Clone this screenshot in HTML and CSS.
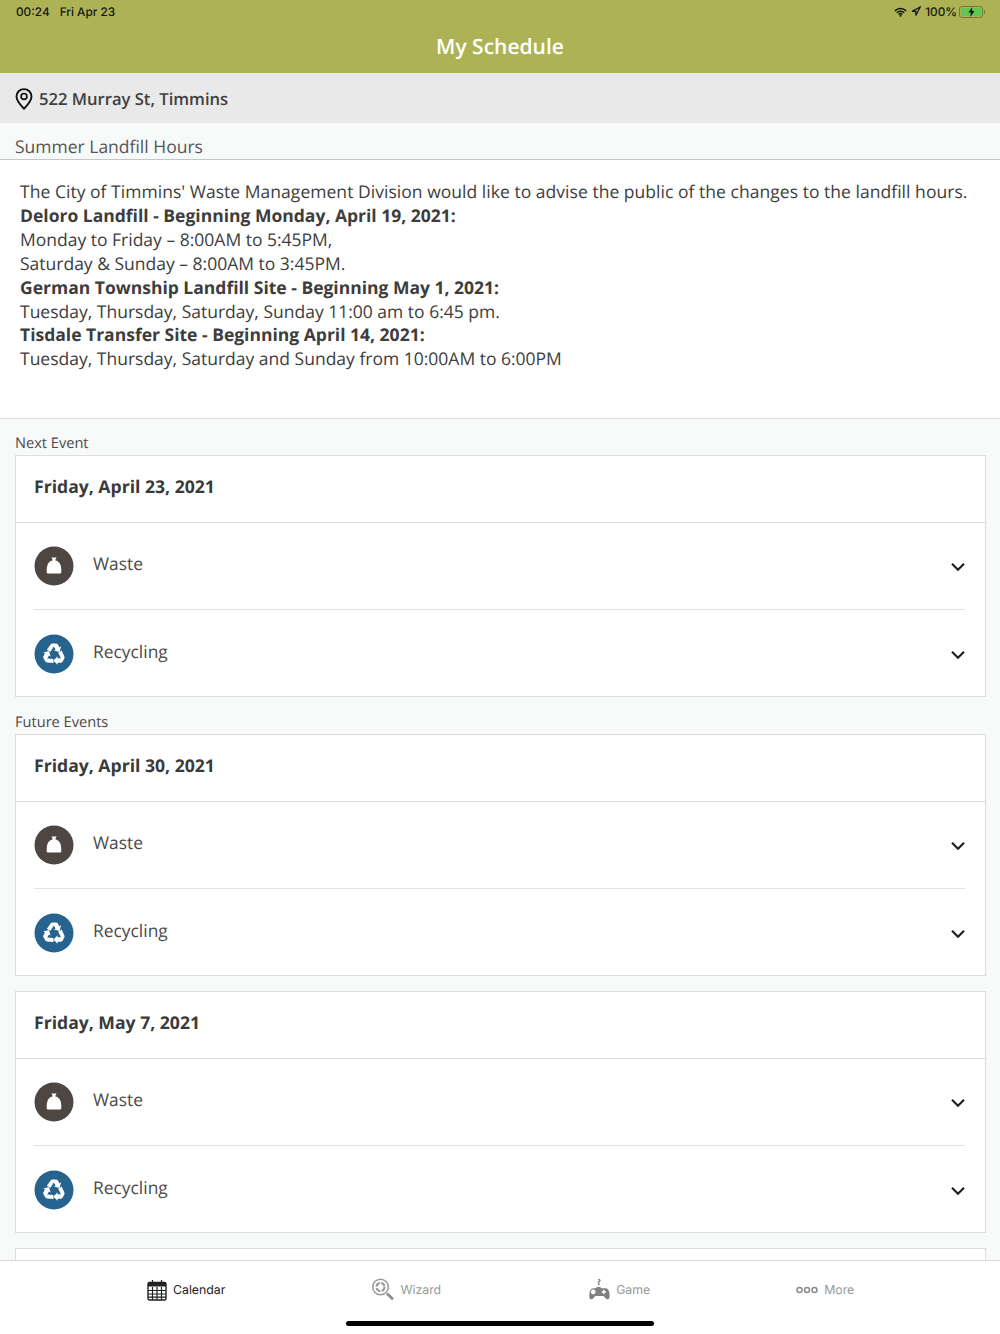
FILE: index.html
```html
<!DOCTYPE html>
<html lang="en">
<head>
  <meta charset="UTF-8">
  <meta name="viewport" content="width=device-width, initial-scale=1.0">
  <title>My Schedule</title>
  <link rel="stylesheet" href="styles.css">
</head>
<body>
  <svg class="defs" width="0" height="0">
    <symbol id="bag" viewBox="0 0 40 40">
      <circle cx="20" cy="20" r="19.5" fill="#4d4643"/>
      <path d="M17.500 11.500h5l-1.300 2.800c2.900.8 5 2.800 5.700 6 .4 1.900.5 3.900.4 5.700-.1 1-.6 1.500-1.500 1.500H14.200c-.9 0-1.400-.5-1.500-1.500-.1-1.800 0-3.800.4-5.700.7-3.200 2.800-5.200 5.700-6z" fill="#fff"/>
    </symbol>
    <symbol id="recycle" viewBox="0 0 40 40">
      <circle cx="20" cy="20" r="19.5" fill="#26638f"/>
      <g id="recycle-arm" fill="#fff">
        <path d="M12.800 15.800l3.800-5.300c.5-.7 1.200-1 2-1h3.400c.8 0 1.400.3 1.800 1l1.600 2.700 1.700-1-1.500 5.700-5.700-1.300 1.700-1-1.800-3-3.300 5.100z"/>
      </g>
      <use href="#recycle-arm" transform="rotate(120 20 20.500)"/>
      <use href="#recycle-arm" transform="rotate(240 20 20.500)"/>
    </symbol>
    <symbol id="chev" viewBox="0 0 14 10">
      <path d="M1 1.800L7 7.800l6-6" fill="none" stroke="#1d1d1d" stroke-width="2.100"/>
    </symbol>
  </svg>

  <header class="top">
    <div class="status">
      <div class="status-left"><span>00:24</span><span>Fri Apr 23</span></div>
      <div class="status-right">
        <svg class="status-wifi" width="13" height="10" viewBox="0 0 15 11"><path d="M1 4.200a9.200 9.200 0 0 1 13 0M3.200 6.400a6 6 0 0 1 8.600 0M5.400 8.300a3 3 0 0 1 4.200 0" fill="none" stroke="#111" stroke-width="1.700"/><circle cx="7.500" cy="9.800" r="1.200" fill="#111"/></svg>
        <svg class="status-arrow" width="10" height="11" viewBox="0 0 10 11"><path d="M9.200 1L1 5.400h3.800v4.200z" fill="none" stroke="#111" stroke-width="1.200"/></svg>
        <span>100%</span>
        <div class="battery"><div class="battery-fill"><svg width="7" height="10" viewBox="0 0 7 10"><path d="M4.300 0L.4 5.600h2.500L2.300 10l4.200-5.900H3.900z" fill="#111"/></svg></div></div>
        <div class="battery-tip"></div>
      </div>
    </div>
    <h1 class="title">My Schedule</h1>
  </header>

  <div class="address">
    <svg class="address-pin" width="18" height="22" viewBox="0 0 18 22"><path d="M9 1.100c-4.200 0-7.500 3.200-7.500 7.300 0 4.700 4.800 9.300 7.500 12.300 2.700-3 7.500-7.600 7.500-12.300 0-4.100-3.300-7.300-7.500-7.300z" fill="none" stroke="#111" stroke-width="1.900"/><circle cx="9" cy="8.400" r="2.900" fill="none" stroke="#111" stroke-width="1.700"/></svg>
    <span>522 Murray St, Timmins</span>
  </div>

  <main class="content">
    <h2 class="notice-title">Summer Landfill Hours</h2>
    <div class="notice">
      <span class="notice-lead">The City of Timmins' Waste Management Division would like to advise the public of the changes to the landfill hours.</span><br>
      <b>Deloro Landfill - Beginning Monday, April 19, 2021:</b><br>
      Monday to Friday – 8:00AM to 5:45PM,<br>
      Saturday &amp; Sunday – 8:00AM to 3:45PM.<br>
      <b>German Township Landfill Site - Beginning May 1, 2021:</b><br>
      Tuesday, Thursday, Saturday, Sunday 11:00 am to 6:45 pm.<br>
      <b>Tisdale Transfer Site - Beginning April 14, 2021:</b><br>
      Tuesday, Thursday, Saturday and Sunday from 10:00AM to 6:00PM
    </div>

    <div class="events">
      <h3 class="label label-first">Next Event</h3>
      <section class="card">
        <div class="card-date">Friday, April 23, 2021</div>
        <div class="row"><svg class="kind"><use href="#bag"/></svg><span class="row-name">Waste</span><svg class="chev"><use href="#chev"/></svg></div>
        <div class="row"><svg class="kind"><use href="#recycle"/></svg><span class="row-name">Recycling</span><svg class="chev"><use href="#chev"/></svg></div>
      </section>

      <h3 class="label">Future Events</h3>
      <section class="card">
        <div class="card-date">Friday, April 30, 2021</div>
        <div class="row"><svg class="kind"><use href="#bag"/></svg><span class="row-name">Waste</span><svg class="chev"><use href="#chev"/></svg></div>
        <div class="row"><svg class="kind"><use href="#recycle"/></svg><span class="row-name">Recycling</span><svg class="chev"><use href="#chev"/></svg></div>
      </section>
      <section class="card">
        <div class="card-date">Friday, May 7, 2021</div>
        <div class="row"><svg class="kind"><use href="#bag"/></svg><span class="row-name">Waste</span><svg class="chev"><use href="#chev"/></svg></div>
        <div class="row"><svg class="kind"><use href="#recycle"/></svg><span class="row-name">Recycling</span><svg class="chev"><use href="#chev"/></svg></div>
      </section>
      <section class="card"></section>
    </div>
  </main>

  <nav class="tabs">
    <div class="tab tab-active">
      <svg width="20" height="22" viewBox="0 0 20 22"><rect x="1" y="3.500" width="18" height="17.500" rx="1.500" fill="none" stroke="#222" stroke-width="1.400"/><rect x="1" y="3.500" width="18" height="4" fill="#222"/><path d="M5.500 1v4M14.500 1v4M1 11.500h18M1 15h18M1 18.200h18M5.500 8v13M10 8v13M14.500 8v13" stroke="#222" stroke-width="1.200"/></svg>
      <span>Calendar</span>
    </div>
    <div class="tab">
      <svg width="23" height="24" viewBox="0 0 23 24"><circle cx="9.500" cy="9" r="7.800" fill="none" stroke="#9a9a9a" stroke-width="1.500"/><circle cx="9.500" cy="9" r="4" fill="none" stroke="#9a9a9a" stroke-width="2" stroke-dasharray="5 1.300"/><path d="M16 15.500l6 5.700" stroke="#8a8a8a" stroke-width="2.600"/></svg>
      <span>Wizard</span>
    </div>
    <div class="tab">
      <svg width="23" height="24" viewBox="0 0 24 24"><path d="M11.500 1.200c1.400-.3 2.300.2 2 1.200-.3.900-1.800 1.100-1.600 2.100.1.600.6.800.6 2.500" fill="none" stroke="#808080" stroke-width="1.400"/><path d="M5 10.200h4c.6-1 1.300-1.400 3-1.400s2.400.4 3 1.400h4c2.300 0 3.800 1.600 4.300 4.400.3 2 .4 3.700.1 5.400-.3 1.800-2.700 2.200-3.800.9l-2.300-2.700H8.700l-2.300 2.700c-1.100 1.300-3.500.9-3.800-.9-.3-1.700-.2-3.400.1-5.400.5-2.800 2-4.400 4.300-4.400z" fill="#808080"/><circle cx="6.500" cy="14" r="2.400" fill="#fff"/><path d="M17.500 11.800v4.400M15.300 14h4.400" stroke="#fff" stroke-width="1.500"/></svg>
      <span>Game</span>
    </div>
    <div class="tab">
      <svg width="22" height="8" viewBox="0 0 22 8"><circle cx="3.500" cy="4" r="2.500" fill="none" stroke="#8a8a8a" stroke-width="1.500"/><circle cx="11" cy="4" r="2.500" fill="none" stroke="#8a8a8a" stroke-width="1.500"/><circle cx="18.500" cy="4" r="2.500" fill="none" stroke="#8a8a8a" stroke-width="1.500"/></svg>
      <span>More</span>
    </div>
    <div class="home-bar"></div>
  </nav>
</body>
</html>
```

FILE: styles.css
```css
* {
  box-sizing: border-box;
}

html, body {
  height: 1334px;
  margin: 0;
  overflow: hidden;
}

body {
  display: flex;
  flex-direction: column;
  font-family: "Open Sans", sans-serif;
  background-color: #f8f9f9;
  color: #3a3a3a;
  text-rendering: geometricPrecision;
}

.defs {
  position: absolute;
}

.top {
  height: 73px;
  flex: none;
  background-color: #adb355;
}

.status {
  display: flex;
  justify-content: space-between;
  align-items: center;
  height: 23px;
  padding: 0 15px 0 16px;
  font-family: Inter, sans-serif;
  font-size: 11.800px;
  font-weight: 500;
  color: #141414;
}

.status-left {
  display: flex;
  gap: 10px;
}

.status-right {
  display: flex;
  align-items: center;
  gap: 3px;
}

.status-wifi {
  margin-right: 1px;
}

.status-arrow {
  margin-right: 1px;
}

.battery {
  width: 24px;
  height: 12px;
  margin-left: -1px;
  padding: 1px;
  border: 1px solid #6f7a32;
  border-radius: 3px;
}

.battery-fill {
  display: flex;
  justify-content: center;
  align-items: center;
  height: 100%;
  background-color: #62c554;
  border-radius: 1px;
}

.battery-tip {
  width: 1px;
  height: 4px;
  margin-left: -2px;
  background-color: #6f7a32;
}

.title {
  margin: 0;
  text-align: center;
  font-size: 21px;
  font-weight: 600;
  line-height: 48px;
  color: #fff;
}

.address {
  display: flex;
  align-items: center;
  gap: 6px;
  height: 50px;
  flex: none;
  padding-left: 15px;
  background-color: #e9e9ea;
  font-size: 16.600px;
  font-weight: 600;
  color: #404040;
}

.address span {
  margin-top: 1px;
}

.address-pin {
  margin-top: 2px;
}

.content {
  flex: 1;
  min-height: 0;
  overflow: hidden;
}

.notice-title {
  height: 37px;
  margin: 0;
  padding: 12px 15px 0;
  border-bottom: 1px solid #c4c5c6;
  font-size: 17.500px;
  font-weight: 400;
  line-height: 25px;
  color: #555;
}

.notice {
  height: 259px;
  padding: 21px 20px 0;
  background-color: #fff;
  border-bottom: 1px solid #dedfe0;
  font-size: 17.500px;
  line-height: 23.900px;
  color: #3d3d3d;
}

.notice-lead {
  letter-spacing: 0.035px;
}

.notice b {
  font-weight: 700;
}

.events {
  padding: 0 14px 0 15px;
}

.label {
  height: 37px;
  margin: 0;
  padding-top: 15px;
  font-size: 14.600px;
  font-weight: 400;
  line-height: 20px;
  color: #4a4a4a;
}

.label-first {
  height: 36px;
  padding-top: 14px;
}

.card {
  height: 242px;
  margin-bottom: 15px;
  background-color: #fff;
  border: 1px solid #dcdcdd;
}

.label + .card {
  margin-bottom: 0;
}

.label + .card + .card {
  margin-top: 15px;
}

.card-date {
  height: 67px;
  padding-left: 18px;
  border-bottom: 1px solid #dcdcdd;
  font-size: 17.600px;
  font-weight: 700;
  line-height: 62px;
  color: #3a3a3a;
}

.row {
  display: flex;
  align-items: center;
  height: 86px;
  margin: 0 20px 0 18px;
  font-size: 17.400px;
  color: #4a4a4a;
}

.row + .row {
  height: 87px;
  padding-top: 1px;
  border-top: 1px solid #e3e3e4;
}

.kind {
  width: 40px;
  height: 40px;
  flex: none;
}

.row-name {
  flex: 1;
  margin: -4px 0 0 19px;
}

.chev {
  width: 14px;
  height: 10px;
  margin-top: 2px;
}

.tabs {
  position: relative;
  display: flex;
  height: 74px;
  flex: none;
  padding-left: 147px;
  gap: 146px;
  background-color: #fff;
  border-top: 1px solid #dcdcdd;
  font-family: Inter, sans-serif;
  font-size: 12.300px;
  color: #999;
}

.tab {
  display: flex;
  align-items: center;
  gap: 6px;
  height: 57px;
}

.tab-active {
  color: #222;
}

.home-bar {
  position: absolute;
  left: 346px;
  top: 60px;
  width: 308px;
  height: 5px;
  background-color: #000;
  border-radius: 3px;
}
```
